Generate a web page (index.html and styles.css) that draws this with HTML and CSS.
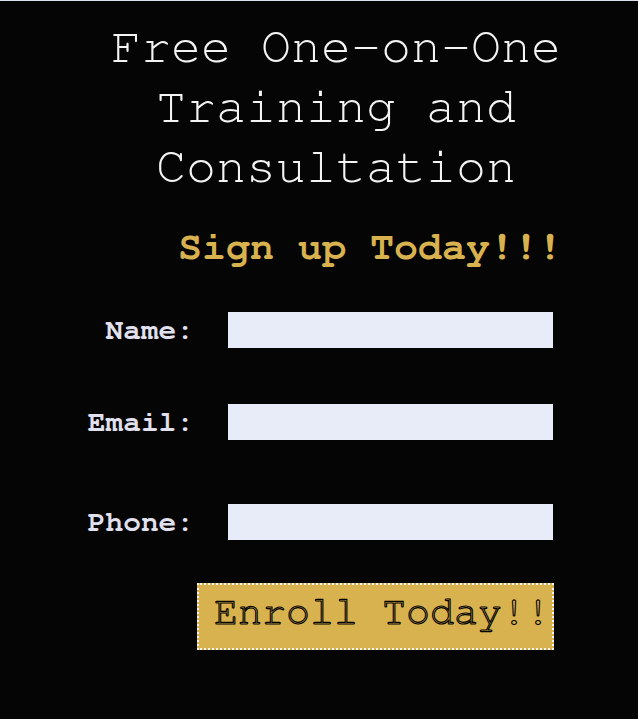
FILE: index.html
```html
<!DOCTYPE html>
<html>
<head>
<meta charset="utf-8">
<title>Free One-on-One Training</title>
<link rel="stylesheet" href="styles.css">
</head>
<body>
<div class="page">
  <h1 class="title">Free One-on-One Training and Consultation</h1>
  <h2 class="signup">Sign up Today!!!</h2>
  <form class="form">
    <div class="row row-name">
      <label class="label" for="name">Name:</label>
      <input class="field" id="name" type="text">
    </div>
    <div class="row row-email">
      <label class="label" for="email">Email:</label>
      <input class="field" id="email" type="text">
    </div>
    <div class="row row-phone">
      <label class="label" for="phone">Phone:</label>
      <input class="field" id="phone" type="text">
    </div>
    <div class="actions">
      <button class="enroll" type="button">Enroll Today!!</button>
    </div>
  </form>
</div>
</body>
</html>
```

FILE: styles.css
```css
html, body {
  margin: 0;
  padding: 0;
  background: #050505;
}
body {
  border-top: 1px solid #dde2ee;
  height: 718px;
  overflow: hidden;
  font-family: "Nimbus Mono PS", "Nimbus Mono L", FreeMono, Courier, "Liberation Mono", monospace;
}
.page {
  padding-top: 16px;
}
.title {
  margin: 0 0 0 34px;
  font-size: 50px;
  line-height: 60px;
  font-weight: normal;
  color: #f4f4f4;
  text-align: center;
}
.signup {
  margin: 26px 76px 0 0;
  font-size: 40px;
  line-height: 48px;
  font-weight: bold;
  color: #d9b250;
  text-align: right;
}
.form {
  margin: 0;
  padding-top: 41px;
}
.row {
  display: grid;
  grid-template-columns: 194px 325px;
  column-gap: 34px;
  align-items: center;
  height: 36px;
}
.row-email { margin-top: 56px; }
.row-phone { margin-top: 64px; }
.label {
  font-size: 29.5px;
  line-height: 36px;
  font-weight: bold;
  color: #e0e0ee;
  text-align: right;
}
.field {
  box-sizing: border-box;
  width: 325px;
  height: 36px;
  margin: 0;
  border: none;
  padding: 0;
  background: #e8ecf8;
}
.actions {
  margin-top: 43px;
  padding-left: 197px;
}
.enroll {
  box-sizing: border-box;
  display: block;
  width: 357px;
  height: 67px;
  margin: 0;
  padding: 7px 1px 16px 15px;
  border: 2px dotted #f4f4f4;
  background: #d9b250;
  font-family: "Nimbus Mono PS", "Nimbus Mono L", FreeMono, Courier, "Liberation Mono", monospace;
  font-size: 40px;
  line-height: 40px;
  color: #d9b250;
  -webkit-text-stroke: 1.1px #000;
  text-align: left;
  white-space: nowrap;
}
```
